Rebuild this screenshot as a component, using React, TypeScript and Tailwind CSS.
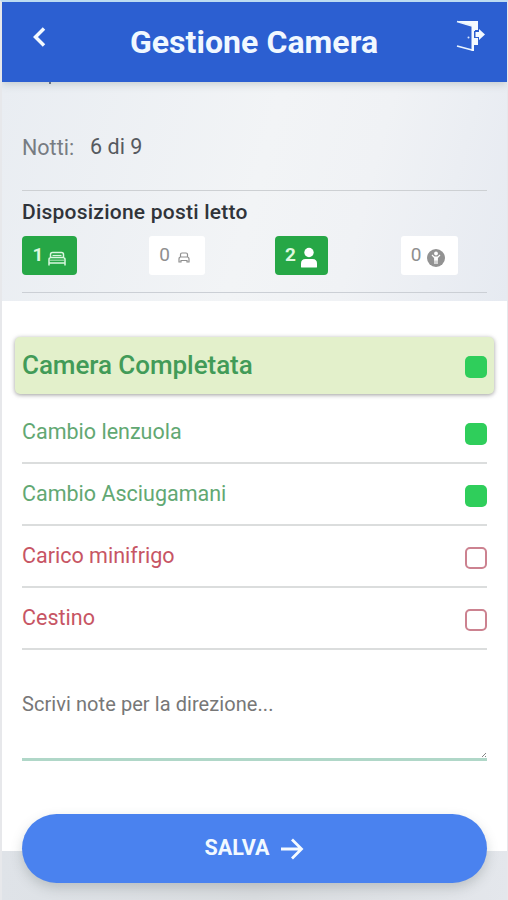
import React from "react";

type Task = { label: string; done: boolean };

const tasks: Task[] = [
  { label: "Cambio lenzuola", done: true },
  { label: "Cambio Asciugamani", done: true },
  { label: "Carico minifrigo", done: false },
  { label: "Cestino", done: false },
];

function CheckBox({ done }: { done: boolean }) {
  return (
    <span
      className={
        done
          ? "mt-[3px] block h-[22px] w-[22px] rounded-[5px] bg-[#2fce5b]"
          : "mt-[3px] block h-[22px] w-[22px] rounded-[5px] border-2 border-[#cc8290] bg-white"
      }
    />
  );
}

function DoorIcon() {
  return (
    <svg width="30" height="32" viewBox="0 0 30 32" className="block">
      <path d="M1 1H22V10H18.500V5.500L10 4.500Z" fill="#f4faff" />
      <path d="M1 1.500L16 6M1 26L16 30" fill="none" stroke="#e9f4ff" strokeWidth="1.800" />
      <path d="M15.500 5H19V11H18V18H22V25H18V31H15.500Z" fill="#f4faff" />
      <path d="M19.500 12H23V9L29 14.500L23 20V17H19.500Z" fill="#f4faff" />
      <circle cx="12.500" cy="17.500" r="1" fill="#dceaff" />
    </svg>
  );
}

function DoubleBed() {
  return (
    <svg width="18" height="15" viewBox="0 0 18 15" className="block">
      <path d="M2.500 6.500V3.500Q2.500 1.500 4.500 1.500H13.500Q15.500 1.500 15.500 3.500V6.500M1 14.500V8.500Q1 6.500 3 6.500H15Q17 6.500 17 8.500V14.500M1 12H17" fill="none" stroke="#d9f7df" strokeWidth="1.500" />
      <path d="M4.500 4.500H13.500" stroke="#d9f7df" strokeWidth="1.200" />
      <path d="M2 9.200H16" stroke="#b4e6bf" strokeWidth="1" />
    </svg>
  );
}

function SingleBed() {
  return (
    <svg width="12" height="13" viewBox="0 0 12 13" className="block">
      <path d="M2.500 6V3.500Q2.500 2 4 2H8Q9.500 2 9.500 3.500V6M1 11V8Q1 6 3 6H9Q11 6 11 8V11H9V9.500H3V11H1Z" fill="none" stroke="#8f8f8f" strokeWidth="1.200" />
    </svg>
  );
}

function Person() {
  return (
    <svg width="18" height="21" viewBox="0 0 18 21" className="block">
      <circle cx="9" cy="5.500" r="4.700" fill="#fff" />
      <path d="M1 20V16.500Q1 12 5.500 12H12.500Q17 12 17 16.500V20Q17 20.500 16 20.500H2Q1 20.500 1 20Z" fill="#fff" />
    </svg>
  );
}

function Child() {
  return (
    <svg width="18" height="18" viewBox="0 0 18 18" className="block">
      <circle cx="9" cy="9" r="9" fill="#929292" />
      <circle cx="9" cy="4.500" r="1.900" fill="#fff" />
      <path d="M5 6L7.500 8.500M13 6L10.500 8.500M8 8V15M10 8V15" fill="none" stroke="#fff" strokeWidth="1.200" />
      <path d="M7.200 7.500H10.800V11.500H7.200Z" fill="#fff" />
    </svg>
  );
}

export default function App() {
  return (
    <div className="flex h-[900px] w-[508px] flex-col overflow-hidden border-t-2 border-r border-l-2 border-x-[#e7e8eb] border-t-[#bddcf2] bg-white font-['Roboto',sans-serif]">
      <header className="z-10 flex h-20 shrink-0 items-center bg-[#2c5fd1] pr-[21px] pl-[28px] shadow-[0_2px_8px_rgba(90,110,110,0.28)]">
        <svg width="16" height="22" viewBox="0 0 16 22" className="mb-2.5 block">
          <path d="M14 2.500L5.500 11L14 19.500" fill="none" stroke="#f4faff" strokeWidth="3.500" />
        </svg>
        <h1 className="flex-1 pl-[6px] text-center text-[32px] leading-[40px] font-bold tracking-[0.05px] whitespace-nowrap text-[#f1f8ff]">
          Gestione Camera
        </h1>
        <div className="mb-3">
          <DoorIcon />
        </div>
      </header>

      <section className="h-[219px] shrink-0 bg-[linear-gradient(105deg,#e9edf2_0%,#f2f4f6_50%,#f0f2f5_70%,#e6eaf1_100%)] px-5">
        <div className="-mt-px ml-[27px] h-[3px] w-[2px] bg-[#65718c]" />
        <div className="flex h-[107px] items-start gap-4 border-b border-[#cdd0d3] pt-[50px] leading-[26px]">
          <span className="pt-px text-[21.5px] text-[#777c82]">Notti:</span>
          <span className="text-[21.5px] text-[#565a60]">6 di 9</span>
        </div>
        <h2 className="pt-2 text-[21px] leading-[26px] font-medium tracking-[0.23px] whitespace-nowrap text-[#30343a]">
          Disposizione posti letto
        </h2>
        <div className="mt-[11px] flex h-[39px]">
          <div className="w-[127px]">
            <div className="flex h-[39px] w-[55px] items-center justify-center gap-[5px] rounded-[4px] bg-[#26a746] text-[19px] font-bold text-[#ddf8df]">
              1
              <span className="mt-[6px]"><DoubleBed /></span>
            </div>
          </div>
          <div className="w-[126px]">
            <div className="flex h-[39px] w-[56px] items-center justify-center gap-[8px] rounded-[3px] bg-white pr-[5px] text-[19px] text-[#8f8f8f]">
              0
              <span className="mt-[4px]"><SingleBed /></span>
            </div>
          </div>
          <div className="w-[126px]">
            <div className="flex h-[39px] w-[53px] items-center justify-center gap-[4px] rounded-[4px] bg-[#26a746] text-[19px] font-bold text-[#ddf8df]">
              2
              <span className="mt-[4px]"><Person /></span>
            </div>
          </div>
          <div className="flex h-[39px] w-[57px] items-center justify-center gap-[6px] rounded-[3px] bg-white pr-[3px] text-[19px] text-[#8f8f8f]">
            0
            <span className="mt-[4px]"><Child /></span>
          </div>
        </div>
        <div className="mt-[17px] border-t border-[#cbcfd5]" />
      </section>

      <main className="h-[550px] shrink-0 bg-white px-5 pt-[36px]">
        <div className="mx-[-7px] flex h-[57px] items-center justify-between rounded-[5px] bg-[#e3f0cb] px-[7px] shadow-[0_1px_4px_rgba(90,90,90,0.6)]">
          <span className="text-[26px] font-medium tracking-[-0.06px] text-[#429b58]">Camera Completata</span>
          <CheckBox done />
        </div>
        <ul className="mt-2">
          {tasks.map((task) => (
            <li key={task.label} className="flex h-[62px] items-center justify-between border-b-2 border-[#dbdddd]">
              <span className={task.done ? "text-[21.5px] text-[#62a873]" : "text-[21.5px] text-[#c75564]"}>
                {task.label}
              </span>
              <CheckBox done={task.done} />
            </li>
          ))}
        </ul>
        <div className="flex h-[111px] items-start justify-between border-b-[3px] border-[#b0d7c8] pt-[41px]">
          <span className="text-[20px] leading-[26px] tracking-[0.07px] text-[#777]">Scrivi note per la direzione...</span>
          <svg width="6" height="6" viewBox="0 0 6 6" className="self-end">
            <path d="M1 5L5 1M4 5L5 4" stroke="#858585" />
          </svg>
        </div>
      </main>

      <footer className="h-[49px] shrink-0 bg-[linear-gradient(90deg,#dfe3e8,#dadde0_50%,#e4e7ec)] px-5">
        <button className="-mt-[37px] flex h-[69px] w-full items-center justify-center gap-[11px] rounded-full bg-[#4a82ef] text-[21.5px] font-bold text-[#f2f9ff] shadow-[0_5px_12px_rgba(80,90,90,0.25)]">
          SALVA
          <svg width="24" height="22" viewBox="0 0 24 22" className="block">
            <path d="M1 11H21M12 1.500L21.500 11L12 20.500" fill="none" stroke="#f6fbff" strokeWidth="2.800" />
          </svg>
        </button>
      </footer>
    </div>
  );
}
